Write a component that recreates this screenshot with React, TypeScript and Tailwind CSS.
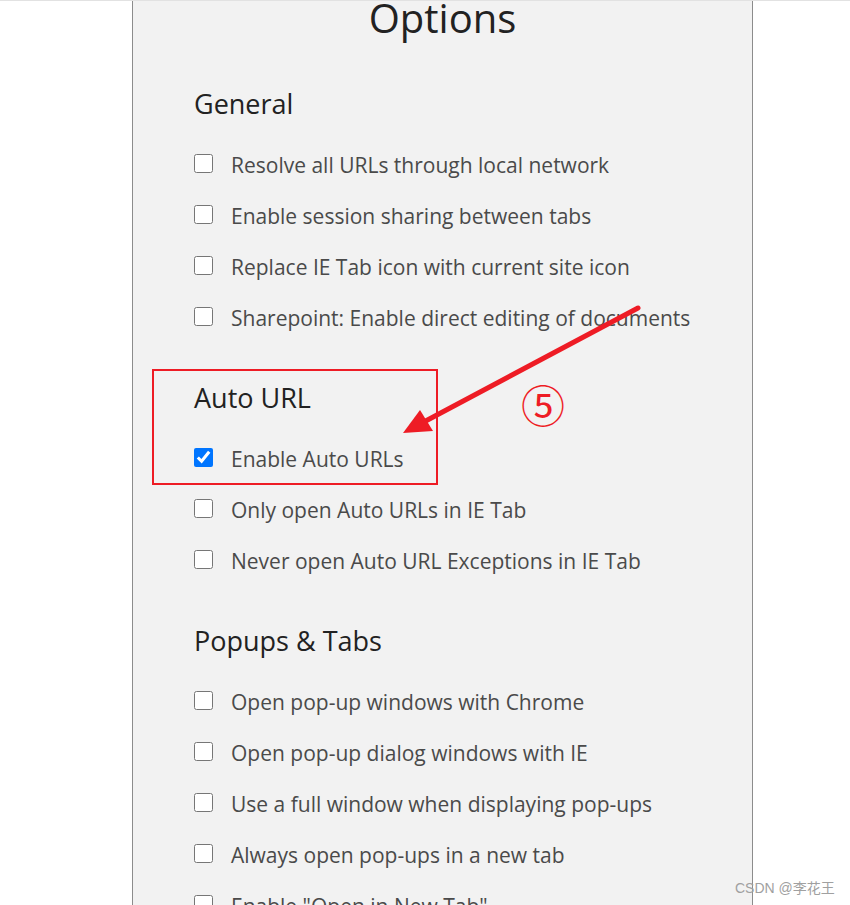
import React from "react";

type Section = { title: string; items: { label: string; checked?: boolean }[] };

const sections: Section[] = [
  {
    title: "General",
    items: [
      { label: "Resolve all URLs through local network" },
      { label: "Enable session sharing between tabs" },
      { label: "Replace IE Tab icon with current site icon" },
      { label: "Sharepoint: Enable direct editing of documents" },
    ],
  },
  {
    title: "Auto URL",
    items: [
      { label: "Enable Auto URLs", checked: true },
      { label: "Only open Auto URLs in IE Tab" },
      { label: "Never open Auto URL Exceptions in IE Tab" },
    ],
  },
  {
    title: "Popups & Tabs",
    items: [
      { label: "Open pop-up windows with Chrome" },
      { label: "Open pop-up dialog windows with IE" },
      { label: "Use a full window when displaying pop-ups" },
      { label: "Always open pop-ups in a new tab" },
      { label: 'Enable "Open in New Tab"' },
    ],
  },
];

const OptionRow = ({ label, checked }: { label: string; checked?: boolean }) => (
  <label className="flex h-[51px] items-center">
    <input
      type="checkbox"
      defaultChecked={checked}
      className="m-0 -mt-[3px] h-[19px] w-[19px] shrink-0 accent-[#0075ff]"
    />
    <span className="ml-[18px] text-[21px] leading-[30px] text-[#4a4a4a]">{label}</span>
  </label>
);

export default function App() {
  return (
    <div className="relative h-[905px] overflow-hidden border-t border-[#e2e2e2] bg-white font-['Open_Sans',sans-serif]">
      {/* settings panel */}
      <div className="ml-[132px] min-h-[920px] w-[621px] border-x border-[#8c8c8c] bg-[#f2f2f2]">
        <h1 className="-mt-[8px] text-center text-[40px] leading-[50px] text-[#222]">Options</h1>
        <div className="pl-[61px] pt-[45px]">
          {sections.map((s, i) => (
            <div key={s.title} className={i > 0 ? "mt-[39px]" : ""}>
              <h3 className="mb-[19px] text-[27px] leading-[32px] text-[#222]">{s.title}</h3>
              {s.items.map((it) => (
                <OptionRow key={it.label} label={it.label} checked={it.checked} />
              ))}
            </div>
          ))}
        </div>
      </div>

      {/* annotation: red box + arrow + number */}
      <div className="pointer-events-none absolute left-[152px] top-[368px] h-[116px] w-[286px] border-2 border-[#ee1c25]" />
      <svg className="pointer-events-none absolute left-0 top-0" width="850" height="905">
        <line x1="638" y1="307" x2="420" y2="423" stroke="#ee1c25" strokeWidth="5" strokeLinecap="round" />
        <polygon points="403,432 420,409 433,430" fill="#ee1c25" />
      </svg>
      <div className="pointer-events-none absolute left-[521px] top-[378px] font-['Noto_Sans_CJK_SC',sans-serif] text-[44px] leading-[50px] text-[#ee1c25]">
        ⑤
      </div>

      {/* watermark */}
      <div className="pointer-events-none absolute left-[735px] top-[878px] font-['Liberation_Sans','Noto_Sans_CJK_SC',sans-serif] text-[14px] leading-[18px] text-[#a0a0a0]">
        CSDN @李花王
      </div>
    </div>
  );
}
